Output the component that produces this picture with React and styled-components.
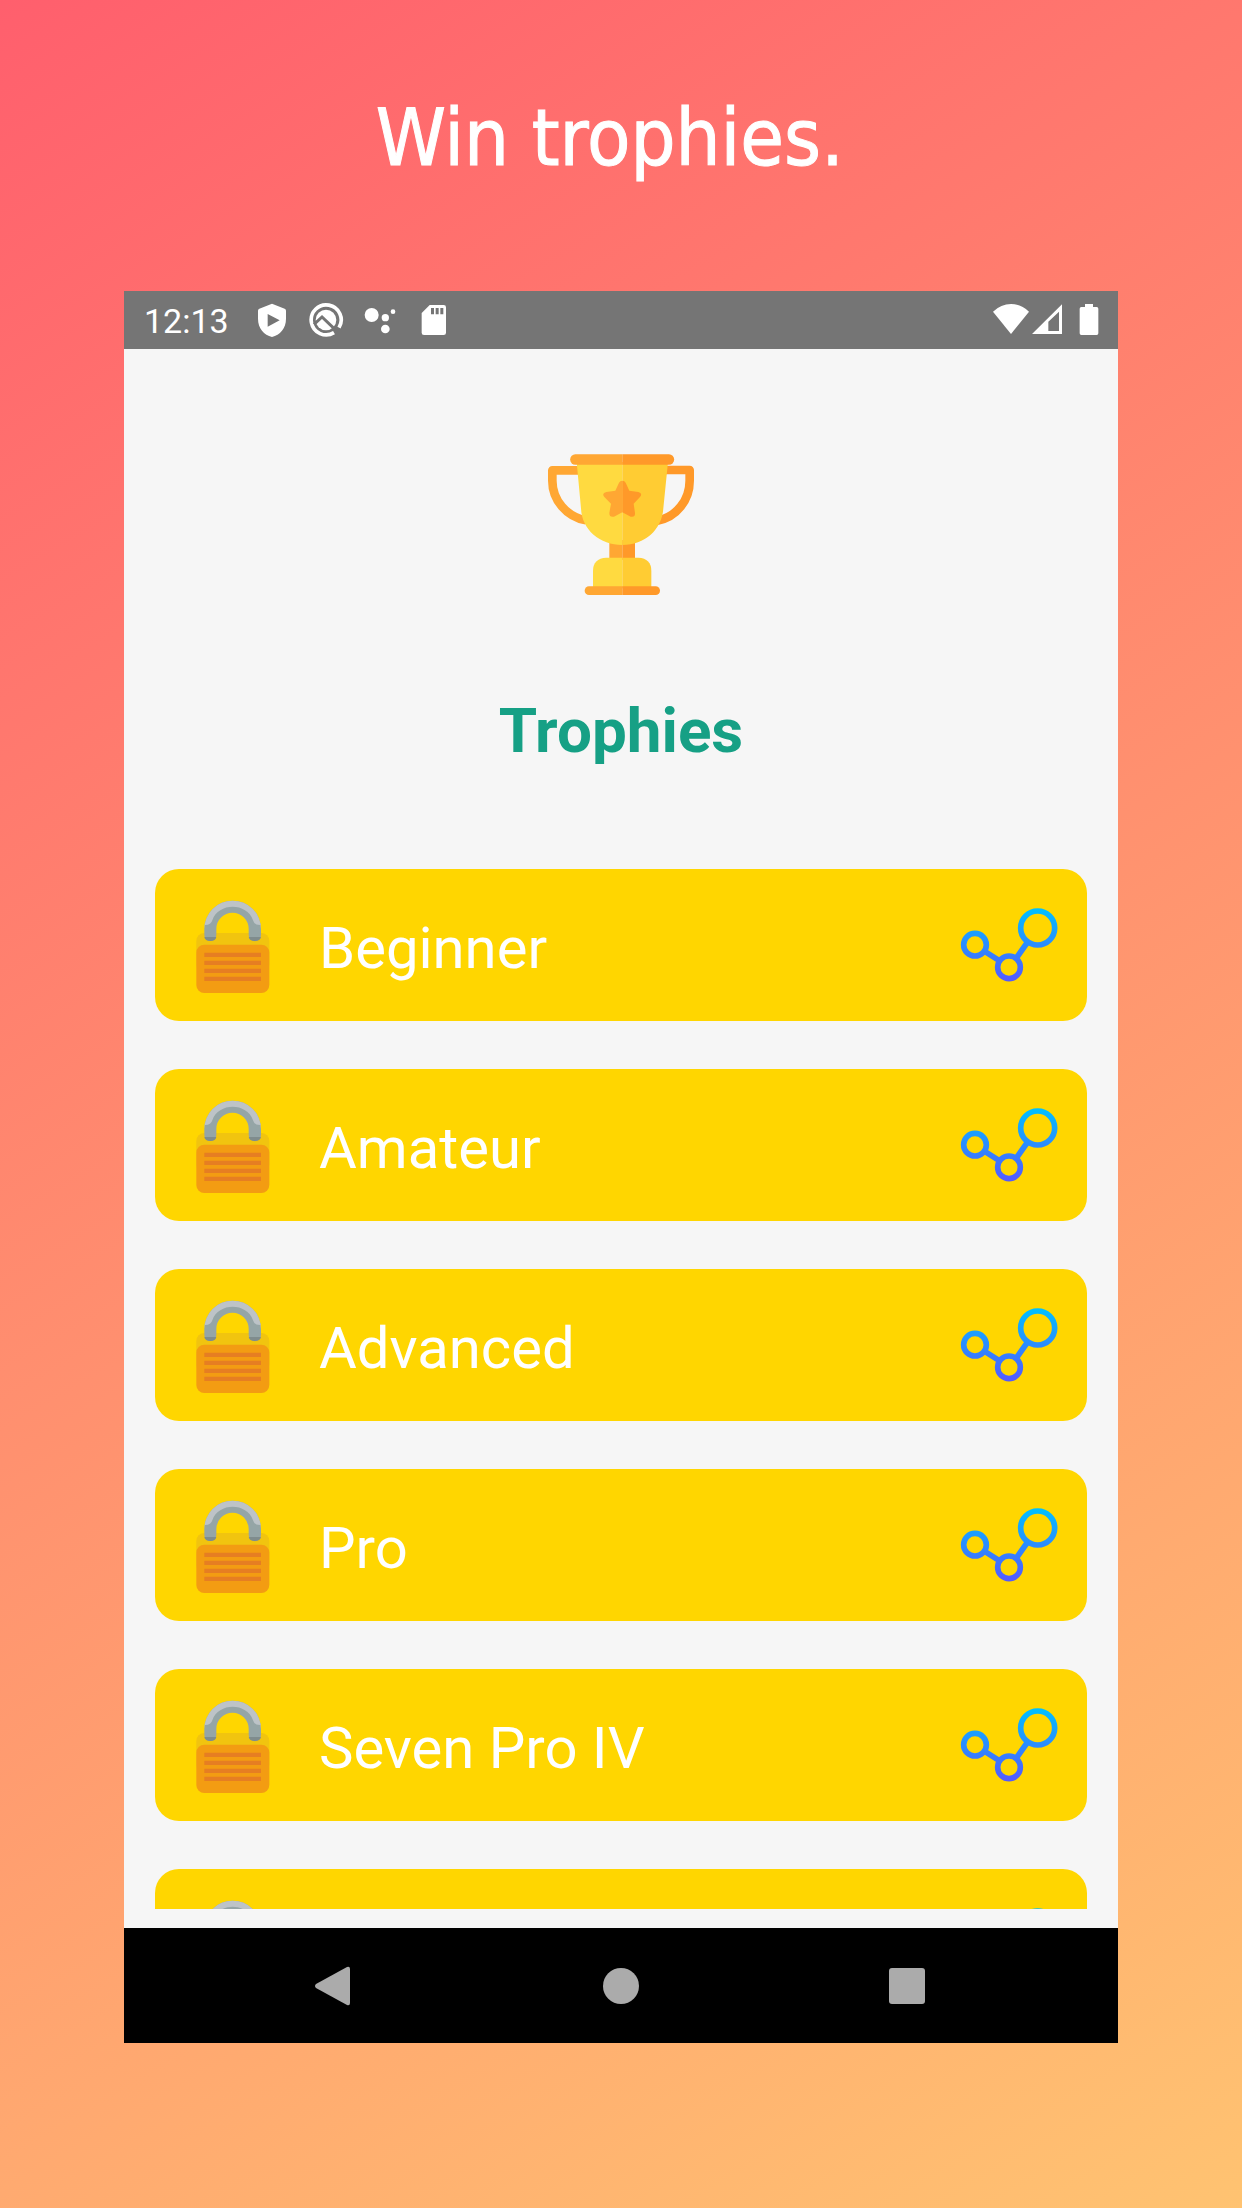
import React from 'react';
import styled, { createGlobalStyle } from 'styled-components';

const GlobalStyles = createGlobalStyle`
  * {
    box-sizing: border-box;
    margin: 0;
    padding: 0;
  }
  body {
    font-family: Roboto, 'Liberation Sans', sans-serif;
  }
  svg {
    display: block;
  }
  button {
    border: none;
    background: none;
    cursor: pointer;
  }
`;

const PageStyles = styled.div`
  display: flex;
  flex-direction: column;
  height: 100vh;
  padding: 0 124px 165px;
  background: linear-gradient(150deg, #ff5f6d, #ffc371);
`;

const Headline = styled.h1`
  flex: none;
  height: 291px;
  padding-top: 90px;
  font-family: 'DejaVu Sans Condensed', 'DejaVu Sans', sans-serif;
  font-stretch: condensed;
  font-size: 79px;
  font-weight: 400;
  line-height: 96px;
  text-align: center;
  white-space: pre;
  color: #fff;
  -webkit-text-stroke: 1px #fff;
`;

const Phone = styled.div`
  flex: 1;
  min-height: 0;
  display: flex;
  flex-direction: column;
  background-color: #f6f6f6;
`;

const StatusBarStyles = styled.div`
  flex: none;
  display: flex;
  align-items: center;
  justify-content: space-between;
  height: 58px;
  padding: 0 11px 0 20px;
  background-color: #757575;
  color: #fff;
  .group {
    display: flex;
    align-items: center;
  }
  .notifications {
    gap: 18px;
  }
  .system {
    gap: 6px;
  }
  .time {
    width: 92px;
    padding-top: 2px;
    font-size: 34px;
    line-height: 40px;
  }
`;

const StatusIcon = styled.svg.attrs({
  viewBox: '0 0 108 108',
  'aria-hidden': true,
})`
  width: 36px;
  height: 36px;
  fill: #fff;
`;

const Screen = styled.main`
  flex: 1;
  min-height: 0;
  display: flex;
  flex-direction: column;
  align-items: center;
  padding: 101px 31px 19px;
`;

const TrophyImage = styled.svg`
  flex: none;
  width: 150px;
  height: 150px;
`;

const Title = styled.h2`
  margin: 95px 0 102px;
  font-size: 62px;
  font-weight: 700;
  line-height: 72px;
  color: #16a085;
`;

const TrophyList = styled.ul`
  flex: 1;
  min-height: 0;
  align-self: stretch;
  display: flex;
  flex-direction: column;
  gap: 48px;
  list-style: none;
  overflow-y: auto;
  scrollbar-width: none;
`;

const TrophyCard = styled.li`
  flex: none;
  display: flex;
  align-items: center;
  height: 152px;
  padding: 0 28px 0 30px;
  border-radius: 24px;
  background-color: #ffd600;
  .name {
    flex: 1;
    margin-left: 38px;
    padding-top: 6px;
    font-size: 58px;
    line-height: 68px;
    color: #fff;
  }
`;

const LockImage = styled.svg`
  width: 96px;
  height: 96px;
`;

const ShareButton = styled.button`
  width: 100px;
  height: 100px;
`;

const NavBarStyles = styled.nav`
  flex: none;
  display: grid;
  grid-template-columns: repeat(3, 1fr);
  height: 115px;
  padding: 0 66px;
  background-color: #000;
`;

const NavButton = styled.button`
  display: flex;
  align-items: center;
  justify-content: center;
  svg {
    width: 40px;
    height: 40px;
    fill: #ababab;
  }
`;

const trophies = [
  'Beginner',
  'Amateur',
  'Advanced',
  'Pro',
  'Seven Pro IV',
  '',
];

function StatusBar() {
  return (
    <StatusBarStyles>
      <div className="group notifications">
        <span className="time">12:13</span>
        <StatusIcon>
          <path
            fillRule="evenodd"
            d="M54 5 L92 20 Q96 22 96 26 V50 C96 80 78 98 54 105 C30 98 12 80 12 50 V26 Q12 22 16 20 Z M41 36 V74 L77 55 Z"
          />
        </StatusIcon>
        <StatusIcon>
          <path
            d="M78 92 A45 45 0 1 1 93 77"
            fill="none"
            stroke="#fff"
            strokeWidth="11"
          />
          <circle cx="54" cy="54" r="31" />
          <path
            d="M18 67 L42 45 L88 89"
            fill="none"
            stroke="#757575"
            strokeWidth="9"
          />
        </StatusIcon>
        <StatusIcon>
          <circle cx="29" cy="39" r="21" />
          <circle cx="70" cy="47" r="11" />
          <circle cx="93" cy="29" r="7" />
          <circle cx="70" cy="81" r="13" />
        </StatusIcon>
        <StatusIcon>
          <path d="M41 9 H83 Q90 9 90 16 V92 Q90 99 83 99 H24 Q17 99 17 92 V33 Z" />
          <path
            d="M45 18 H54 V37 H45 Z M59 18 H68 V37 H59 Z M73 18 H82 V37 H73 Z"
            fill="#757575"
          />
        </StatusIcon>
      </div>
      <div className="group system">
        <div className="group">
          <StatusIcon>
            <path d="M54 96 L0 29 Q24 6 54 6 Q84 6 108 29 Z" />
          </StatusIcon>
          <StatusIcon>
            <path
              fillRule="evenodd"
              d="M9 96 L99 7 V96 Z M58 59 V87 H90 V29 Z"
            />
          </StatusIcon>
        </div>
        <StatusIcon>
          <path d="M42 6 H66 V15 H77 Q82 15 82 20 V94 Q82 99 77 99 H31 Q26 99 26 94 V20 Q26 15 31 15 H42 Z" />
        </StatusIcon>
      </div>
    </StatusBarStyles>
  );
}

function Trophy() {
  return (
    <TrophyImage viewBox="48 30 450 450" role="img" aria-label="Trophy">
      <path
        d="M146 91 H67 V122 C67 180 110 231 168 241"
        fill="none"
        stroke="#ffa733"
        strokeWidth="26"
        strokeLinejoin="round"
      />
      <path
        d="M408 90 H479 V122 C479 180 440 231 382 242"
        fill="none"
        stroke="#ff9929"
        strokeWidth="26"
        strokeLinejoin="round"
      />
      <path d="M238 300 H277 V360 H238 Z" fill="#ffa733" />
      <path d="M277 300 H315 V360 H277 Z" fill="#ff9929" />
      <path d="M140 66 H277 V315 C210 315 155 270 153 205 Z" fill="#ffda40" />
      <path d="M277 66 H414 L400 205 C396 270 344 315 277 315 Z" fill="#ffcc33" />
      <path d="M277 43 H136 a15 15 0 0 0 0 31 H277 Z" fill="#ffa733" />
      <path d="M277 43 H417 a15 15 0 0 1 0 31 H277 Z" fill="#ff9929" />
      <path d="M277 353 H229 Q189 355 189 393 V445 H277 Z" fill="#ffda40" />
      <path d="M277 353 H325 Q364 355 364 393 V445 H277 Z" fill="#ffcc33" />
      <path d="M277 439 H177 a13 13 0 0 0 0 26 H277 Z" fill="#ffa733" />
      <path d="M277 439 H377 a13 13 0 0 1 0 26 H277 Z" fill="#ff9929" />
      <path
        d="M277 122 Q270 122 267 128 L256 152 L229 156 Q214 160 223 171 L243 191 L238 219 Q238 233 252 230 L277 217 Z"
        fill="#ffa733"
      />
      <path
        d="M277 122 Q284 122 287 128 L298 152 L325 156 Q339 160 330 171 L311 191 L315 219 Q316 233 302 230 L277 217 Z"
        fill="#ff9929"
      />
    </TrophyImage>
  );
}

function Lock() {
  return (
    <LockImage viewBox="104 114 288 288" aria-hidden="true">
      <rect x="138" y="222" width="219" height="120" rx="24" fill="#f1c40f" />
      <rect x="138" y="257" width="219" height="145" rx="24" fill="#f39c12" />
      <path
        d="M162 210 A85 85 0 0 1 332 210 V228 A18 18 0 0 1 295 228 V210 A48 48 0 0 0 198 210 V228 A18 18 0 0 1 162 228 Z"
        fill="#95a5a6"
      />
      <path
        d="M162 210 A85 85 0 0 1 332 210 V198 Q312 199 308 184 C290 130 204 130 186 184 Q182 199 162 198 Z"
        fill="#bdc3c7"
      />
      <path
        d="M162 234 H198 Q196 246 180 246 Q164 246 162 234 Z M295 234 H332 Q330 246 313 246 Q297 246 295 234 Z"
        fill="#7f8c8d"
      />
      <path
        d="M162 281 H332 V294 H162 Z M162 305 H332 V318 H162 Z M162 329 H332 V342 H162 Z M162 353 H332 V366 H162 Z"
        fill="#e67e22"
      />
    </LockImage>
  );
}

function ShareIcon({ id }) {
  return (
    <svg viewBox="89 108 300 300" width="100" height="100" aria-hidden="true">
      <defs>
        <linearGradient
          id={id}
          gradientUnits="userSpaceOnUse"
          x1="239"
          y1="148"
          x2="239"
          y2="368"
        >
          <stop offset="0" stopColor="#00c0ff" />
          <stop offset="1" stopColor="#5558ff" />
        </linearGradient>
      </defs>
      <g fill="none" stroke={`url(#${id})`} strokeWidth="17">
        <circle cx="137" cy="257" r="34" />
        <circle cx="239" cy="325" r="34" />
        <circle cx="325" cy="207" r="51" />
        <path d="M166 277 L210 305 M261 297 L295 249" />
      </g>
    </svg>
  );
}

function NavBar() {
  return (
    <NavBarStyles>
      <NavButton aria-label="Back">
        <svg viewBox="0 0 40 40">
          <path d="M2 18 L33 1 Q36 0 36 3 V37 Q36 40 33 39 L2 22 Q0 20 2 18 Z" />
        </svg>
      </NavButton>
      <NavButton aria-label="Home">
        <svg viewBox="0 0 40 40">
          <circle cx="20" cy="20" r="18" />
        </svg>
      </NavButton>
      <NavButton aria-label="Recent apps">
        <svg viewBox="0 0 40 40">
          <rect x="1" y="2" width="36" height="36" rx="3" />
        </svg>
      </NavButton>
    </NavBarStyles>
  );
}

export default function App() {
  return (
    <>
      <GlobalStyles />
      <PageStyles>
        <Headline>{'Win trophies. '}</Headline>
        <Phone>
          <StatusBar />
          <Screen>
            <Trophy />
            <Title>Trophies</Title>
            <TrophyList>
              {trophies.map((name, i) => (
                <TrophyCard key={i}>
                  <Lock />
                  <span className="name">{name}</span>
                  <ShareButton aria-label={`Share ${name}`}>
                    <ShareIcon id={`share-${i}`} />
                  </ShareButton>
                </TrophyCard>
              ))}
            </TrophyList>
          </Screen>
          <NavBar />
        </Phone>
      </PageStyles>
    </>
  );
}
